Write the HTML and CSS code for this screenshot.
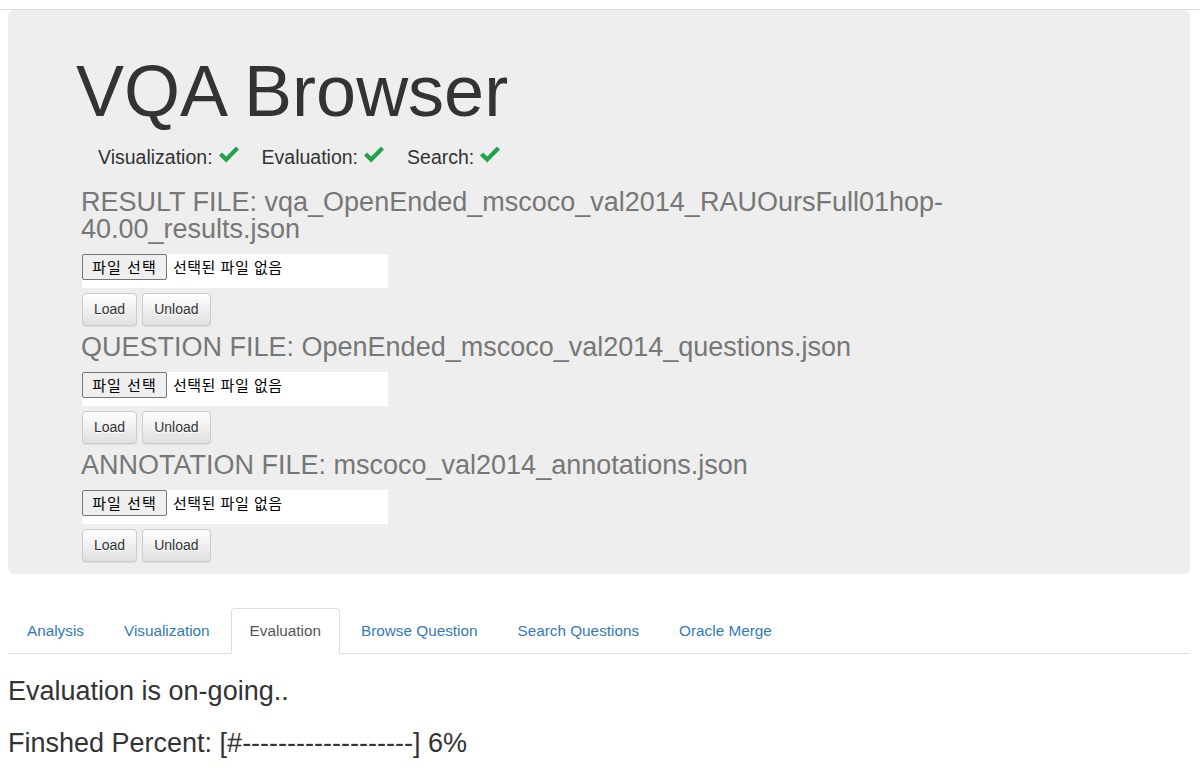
FILE: index.html
```html
<!DOCTYPE html>
<html lang="ko">
<head>
<meta charset="utf-8">
<title>VQA Browser</title>
<link rel="stylesheet" href="styles.css">
</head>
<body>
<div class="topbar"></div>
<div class="page">
  <div class="jumbotron">
    <h1 class="title">VQA Browser</h1>
    <div class="status">
      <span class="status-item"><span>Visualization:</span><svg class="check" viewBox="0 0 20 17" width="20" height="17"><path d="M0 9.5 L3 6.5 L7.2 10.5 L17 0.5 L20 3.5 L7.2 16.5 Z"/></svg></span>
      <span class="status-item"><span>Evaluation:</span><svg class="check" viewBox="0 0 20 17" width="20" height="17"><path d="M0 9.5 L3 6.5 L7.2 10.5 L17 0.5 L20 3.5 L7.2 16.5 Z"/></svg></span>
      <span class="status-item"><span>Search:</span><svg class="check" viewBox="0 0 20 17" width="20" height="17"><path d="M0 9.5 L3 6.5 L7.2 10.5 L17 0.5 L20 3.5 L7.2 16.5 Z"/></svg></span>
    </div>
    <div class="sections">
      <div class="file-section">
        <h3 class="file-heading">RESULT FILE: vqa_OpenEnded_mscoco_val2014_RAUOursFull01hop-40.00_results.json</h3>
        <div class="file-input"><span class="file-btn">파일 선택</span><span class="file-label">선택된 파일 없음</span></div>
        <div class="btn-row"><button class="btn">Load</button><button class="btn">Unload</button></div>
      </div>
      <div class="file-section">
        <h3 class="file-heading">QUESTION FILE: OpenEnded_mscoco_val2014_questions.json</h3>
        <div class="file-input"><span class="file-btn">파일 선택</span><span class="file-label">선택된 파일 없음</span></div>
        <div class="btn-row"><button class="btn">Load</button><button class="btn">Unload</button></div>
      </div>
      <div class="file-section">
        <h3 class="file-heading">ANNOTATION FILE: mscoco_val2014_annotations.json</h3>
        <div class="file-input"><span class="file-btn">파일 선택</span><span class="file-label">선택된 파일 없음</span></div>
        <div class="btn-row"><button class="btn">Load</button><button class="btn">Unload</button></div>
      </div>
    </div>
  </div>

  <ul class="tabs">
    <li><a href="#">Analysis</a></li>
    <li><a href="#">Visualization</a></li>
    <li class="active"><a href="#">Evaluation</a></li>
    <li><a href="#">Browse Question</a></li>
    <li><a href="#">Search Questions</a></li>
    <li><a href="#">Oracle Merge</a></li>
  </ul>

  <div class="result">
    <p class="result-line first">Evaluation is on-going..</p>
    <p class="result-line">Finshed Percent: [#-------------------] 6%</p>
  </div>
</div>
</body>
</html>
```

FILE: styles.css
```css
html, body {
  margin: 0;
  padding: 0;
  background: #fff;
}
body {
  font-family: "Liberation Sans", Arial, sans-serif;
  color: #333;
  overflow: hidden;
}
.topbar {
  height: 9px;
  border-bottom: 1px solid #dcdcdc;
}
.page {
  padding: 0 10px 0 8px;
}
.jumbotron {
  background: #eee;
  border-radius: 6px;
  padding: 42px 0 12px 0;
}
.title {
  margin: 0 0 0 68px;
  font-size: 72px;
  line-height: 79px;
  font-weight: normal;
  color: #333;
}
.status {
  display: flex;
  margin: 14px 0 0 90px;
  font-size: 19.5px;
  line-height: 24px;
  color: #333;
}
.status-item {
  display: inline-flex;
  align-items: center;
  gap: 6px;
  margin-right: 23px;
}
.check {
  fill: #22a347;
  margin-top: -5px;
}
.sections {
  margin: 20px 0 0 74px;
}
.file-section + .file-section {
  margin-top: 8px;
}
.file-heading {
  width: 900px;
  margin: 0 0 11px -1px;
  font-size: 27px;
  line-height: 27px;
  font-weight: normal;
  color: #777;
}
.file-input {
  width: 306px;
  height: 34px;
  background: #fff;
  display: flex;
  align-items: flex-start;
  font-family: "Noto Sans CJK KR", "Liberation Sans", sans-serif;
  font-size: 15px;
  color: #000;
}
.file-btn {
  box-sizing: border-box;
  height: 26px;
  width: 85px;
  line-height: 24px;
  text-align: center;
  letter-spacing: 1px;
  background: #efefef;
  border: 1px solid #767676;
  border-radius: 2px;
}
.file-label {
  margin-left: 6px;
  line-height: 26px;
  letter-spacing: 0.5px;
}
.btn-row {
  display: flex;
  gap: 5px;
  margin-top: 5px;
}
.btn {
  font-family: "Liberation Sans", Arial, sans-serif;
  font-size: 14px;
  line-height: 21px;
  padding: 5px 11px;
  color: #333;
  border: 1px solid #ccc;
  border-radius: 4px;
  background-image: linear-gradient(to bottom, #fff 0, #e0e0e0 100%);
  box-shadow: inset 0 1px 0 rgba(255,255,255,.15), 0 1px 1px rgba(0,0,0,.075);
  text-shadow: 0 1px 0 #fff;
  margin: 0;
}
.tabs {
  display: flex;
  list-style: none;
  padding: 0;
  margin: 34px 0 0 0;
  border-bottom: 1px solid #ddd;
}
.tabs li {
  margin: 0 2px -1px 0;
}
.tabs a {
  display: block;
  padding: 11px 18px 11px;
  line-height: 22px;
  font-size: 15.3px;
  color: #337ab7;
  text-decoration: none;
  border: 1px solid transparent;
  border-radius: 4px 4px 0 0;
}
.tabs li.active a {
  color: #555;
  background: #fff;
  border-color: #ddd;
  border-bottom-color: transparent;
}
.result-line {
  margin: 0;
  font-size: 27px;
  line-height: 30px;
  color: #333;
}
.result-line.first {
  margin-top: 22px;
  margin-bottom: 22px;
}
```
